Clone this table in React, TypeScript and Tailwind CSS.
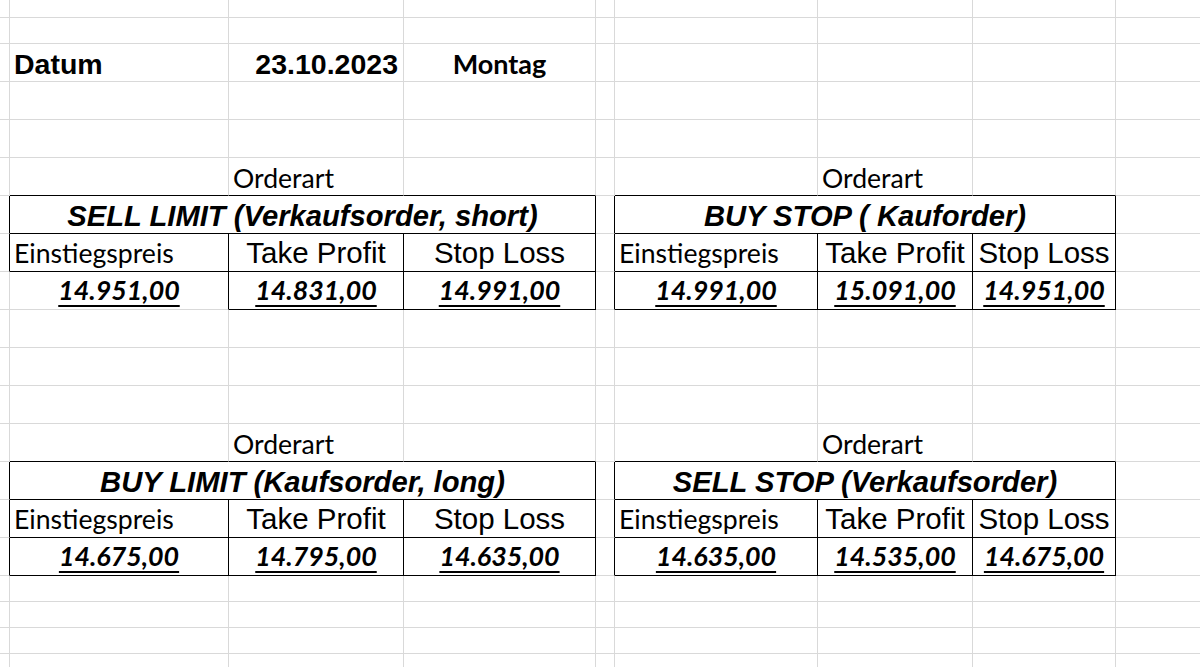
import React from "react";

type Content = { text: string; cls: string; align: "left" | "center" | "right"; span?: number };

const ARIAL = "font-['Liberation_Sans',Arial,sans-serif]";
const CAL = "font-['Lato','Noto_Sans',sans-serif]";

const C_DATUM = `${ARIAL} font-bold text-[28.5px] leading-[28px] pb-[3px] text-black`;
const C_MONTAG = `${CAL} font-bold text-[27px] leading-[26px] pb-[4px] text-black`;
const C_ORDER = `${CAL} text-[26.6px] leading-[26px] pb-[4px] text-black`;
const C_TITLE = `${ARIAL} font-bold italic text-[29.2px] leading-[28px] pb-[3px] text-black`;
const C_HEAD_L = `${CAL} text-[26.6px] leading-[26px] pb-[5px] text-black`;
const C_HEAD_A = `${ARIAL} text-[29.5px] leading-[28px] pb-[4px] text-black`;
const C_VAL = `${CAL} font-bold italic text-[26.8px] leading-[26px] pb-[6px] text-black underline decoration-2 underline-offset-[5px]`;

const ROWS = 20;
const COLS = 9;

const content: Record<string, Content> = {};
const put = (r: number, c: number, v: Content) => {
  content[`${r},${c}`] = v;
};

put(2, 1, { text: "Datum", cls: C_DATUM, align: "left" });
put(2, 2, { text: "23.10.2023", cls: C_DATUM, align: "right" });
put(2, 3, { text: "Montag", cls: C_MONTAG, align: "center" });

type Table = { r: number; c: number; full: boolean; title: string; vals: string[] };
const tables: Table[] = [
  { r: 6, c: 1, full: false, title: "SELL LIMIT (Verkaufsorder, short)", vals: ["14.951,00", "14.831,00", "14.991,00"] },
  { r: 6, c: 5, full: true, title: "BUY STOP ( Kauforder)", vals: ["14.991,00", "15.091,00", "14.951,00"] },
  { r: 13, c: 1, full: true, title: "BUY LIMIT (Kaufsorder, long)", vals: ["14.675,00", "14.795,00", "14.635,00"] },
  { r: 13, c: 5, full: true, title: "SELL STOP (Verkaufsorder)", vals: ["14.635,00", "14.535,00", "14.675,00"] },
];

const rightBlack = new Set<string>();
const bottomBlack = new Set<string>();

tables.forEach((t) => {
  const { r, c, full } = t;
  put(r - 1, c + 1, { text: "Orderart", cls: C_ORDER, align: "left" });
  put(r, c, { text: t.title, cls: C_TITLE, align: "center", span: 3 });
  put(r + 1, c, { text: "Einstiegspreis", cls: C_HEAD_L, align: "left" });
  put(r + 1, c + 1, { text: "Take Profit", cls: C_HEAD_A, align: "center" });
  put(r + 1, c + 2, { text: "Stop Loss", cls: C_HEAD_A, align: "center" });
  t.vals.forEach((v, i) => put(r + 2, c + i, { text: v, cls: C_VAL, align: "center" }));

  for (let k = 0; k < 3; k++) {
    bottomBlack.add(`${r - 1},${c + k}`);
    bottomBlack.add(`${r},${c + k}`);
    bottomBlack.add(`${r + 1},${c + k}`);
    if (full || k > 0) bottomBlack.add(`${r + 2},${c + k}`);
  }
  for (let k = 0; k < 3; k++) {
    if (full || k < 2) rightBlack.add(`${r + k},${c - 1}`);
    rightBlack.add(`${r + k},${c + 2}`);
  }
  for (let k = 1; k < 3; k++) {
    rightBlack.add(`${r + k},${c}`);
    rightBlack.add(`${r + k},${c + 1}`);
  }
});

function Cell({ r, c }: { r: number; c: number }) {
  const ct = content[`${r},${c}`];
  const span = ct?.span ?? 1;
  const lastCol = c + span - 1;
  const rb = rightBlack.has(`${r},${lastCol}`);
  const bb = bottomBlack.has(`${r},${c}`);
  const justify =
    ct?.align === "right" ? "justify-end pr-[5px]" : ct?.align === "center" ? "justify-center" : "justify-start pl-[4px]";
  return (
    <div
      className={[
        "flex items-end whitespace-nowrap overflow-visible border-r border-b",
        span === 3 ? "col-span-3" : "",
        rb ? "border-r-black" : "border-r-[#d9d9d9]",
        bb ? "border-b-black" : "border-b-[#d9d9d9]",
        ct ? justify : "",
      ].join(" ")}
    >
      {ct && <span className={ct.cls}>{ct.text}</span>}
    </div>
  );
}

export default function App() {
  const cells: React.ReactNode[] = [];
  for (let r = 0; r < ROWS; r++) {
    for (let c = 0; c < COLS; c++) {
      const covered = tables.some((t) => t.r === r && (c === t.c + 1 || c === t.c + 2));
      if (covered) continue;
      cells.push(<Cell key={`${r}-${c}`} r={r} c={c} />);
    }
  }
  return (
    <div className="w-[1200px] h-[667px] overflow-hidden bg-white">
      <div className="grid grid-cols-[10px_219px_175px_192px_19px_203px_155px_143px_85px] grid-rows-[18px_26px_repeat(14,38px)_repeat(4,26px)]">
        {cells}
      </div>
    </div>
  );
}
